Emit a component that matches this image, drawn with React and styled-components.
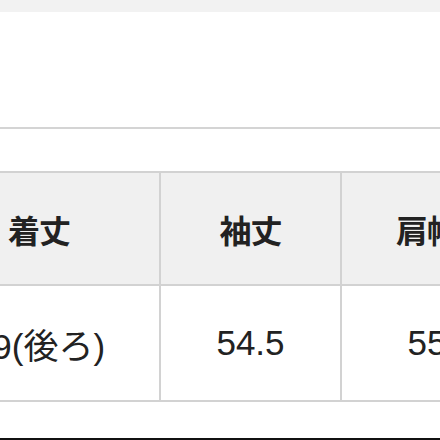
import React from 'react';
import styled, { createGlobalStyle } from 'styled-components';

const GlobalStyle = createGlobalStyle`
  html, body {
    margin: 0;
    padding: 0;
    background: #fff;
    overflow: hidden;
  }
  body {
    font-family: "Liberation Sans", "Noto Sans CJK JP", sans-serif;
    color: #222;
  }
`;

const Page = styled.div`
  width: 440px;
  height: 440px;
  display: flex;
  flex-direction: column;
  overflow: hidden;
`;

const TopBand = styled.div`
  height: 12px;
  background: #f2f2f2;
`;

const Blank = styled.div`
  height: ${(p) => p.h}px;
  flex-shrink: 0;
`;

const Divider = styled.div`
  height: 2px;
  background: #d4d4d4;
`;

const Table = styled.div`
  display: grid;
  grid-template-columns: 242px 181px 172px;
  margin-left: -81px;
  border-top: 2px solid #d2d2d2;
  width: max-content;
`;

const Cell = styled.div`
  height: ${(p) => (p.$head ? 111 : 114)}px;
  display: flex;
  align-items: center;
  justify-content: center;
  background: ${(p) => (p.$head ? '#f0f0f0' : '#fff')};
  border-right: 2px solid #d2d2d2;
  border-bottom: 2px solid #d2d2d2;
  font-size: ${(p) => (p.$head ? 32 : 35)}px;
  font-weight: ${(p) => (p.$head ? 700 : 400)};
  font-family: ${(p) =>
    p.$head
      ? '"Noto Sans CJK JP", sans-serif'
      : '"Liberation Sans", "Noto Sans CJK JP", sans-serif'};
  color: #222;
  white-space: nowrap;
  letter-spacing: ${(p) => (p.$head ? '-1px' : '0')};
`;

const Filler = styled.div`
  flex: 1;
`;

const BottomLine = styled.div`
  height: 2px;
  background: #111;
`;

const heads = ['着丈', '袖丈', '肩幅'];
const values = ['69(後ろ)', '54.5', '55'];

export default function App() {
  return (
    <Page>
      <GlobalStyle />
      <TopBand />
      <Blank h={115} />
      <Divider />
      <Blank h={42} />
      <Table>
        {heads.map((h) => (
          <Cell key={h} $head>
            {h}
          </Cell>
        ))}
        {values.map((v) => (
          <Cell key={v}>{v}</Cell>
        ))}
      </Table>
      <Filler />
      <BottomLine />
    </Page>
  );
}
